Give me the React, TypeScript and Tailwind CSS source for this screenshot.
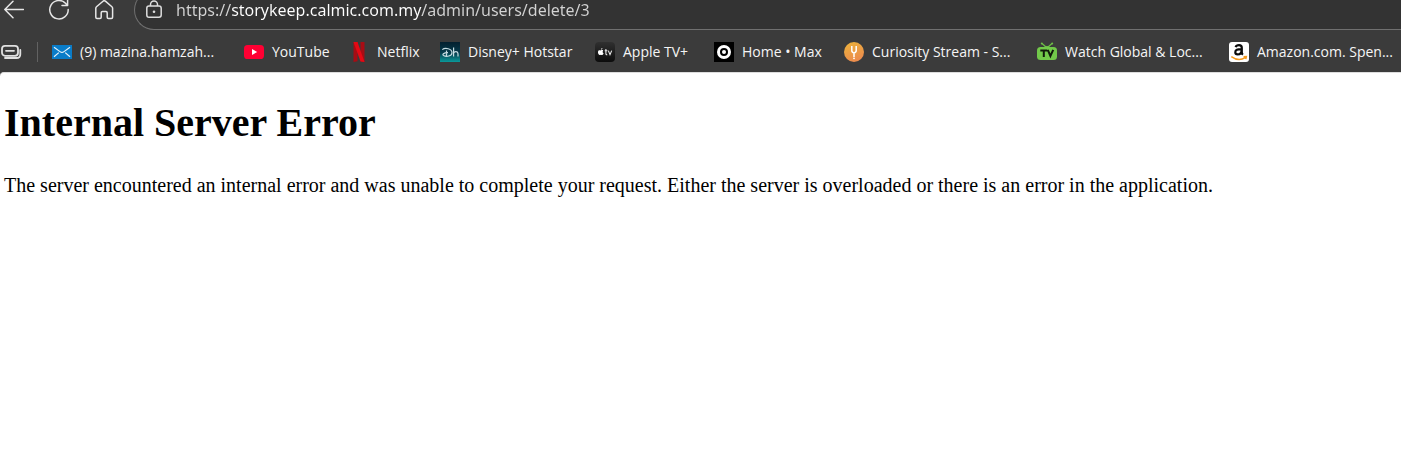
import type { ReactNode } from "react";

function MailIcon() {
  return (
    <svg viewBox="0 0 20 20" className="size-5 shrink-0" aria-hidden="true">
      <rect y="3" width="20" height="14" fill="#0a7cc8" />
      <path d="M2 5.2 8 9.6q2 1.7 4 0l6-4.4M2 14.8l4.8-4.2M18 14.8l-4.8-4.2" fill="none" stroke="#e4f1fa" strokeWidth="1.2" />
    </svg>
  );
}

function YouTubeIcon() {
  return (
    <svg viewBox="0 0 20 20" className="size-5 shrink-0" aria-hidden="true">
      <rect y="3" width="20" height="14" rx="3.6" fill="#ff0033" />
      <path d="M8 7v6l5.2-3z" fill="#fff" />
    </svg>
  );
}

function NetflixIcon() {
  return (
    <svg viewBox="0 0 20 20" className="size-5 shrink-0" aria-hidden="true">
      <path d="M4.500 0h4v19.300l-4 .7zM11.500 0h4v20l-4-.7z" fill="#a80c14" />
      <path d="M4.500 0h4l7 20-4-.6z" fill="#e50914" />
    </svg>
  );
}

function HotstarIcon() {
  return (
    <svg viewBox="0 0 20 20" className="size-5 shrink-0" aria-hidden="true">
      <defs>
        <linearGradient id="hotstar" x1="0" y1="0" x2="0" y2="1">
          <stop offset="0" stopColor="#04202f" />
          <stop offset=".55" stopColor="#063c4c" />
          <stop offset="1" stopColor="#0a9a9b" />
        </linearGradient>
      </defs>
      <rect width="20" height="20" fill="url(#hotstar)" />
      <path d="M2.300 7.600C5 5.300 12 6.600 12 10.700c0 3.600-5.700 4.400-8.500 2.700-1.500-1-.2-2.600 4.500-2.700M6.500 8.600v5.400M13.600 5.600v9M13.600 11.200c.8-2 4.400-2.200 4.400.5v2.900" fill="none" stroke="#c6dde3" strokeWidth="1.200" />
    </svg>
  );
}

function AppleTvIcon() {
  return (
    <svg viewBox="0 0 20 20" className="size-5 shrink-0" aria-hidden="true">
      <defs>
        <linearGradient id="appletv" x1="0" y1="0" x2="0" y2="1">
          <stop offset="0" stopColor="#303030" />
          <stop offset="1" stopColor="#0c0c0c" />
        </linearGradient>
      </defs>
      <rect width="20" height="20" rx="4" fill="url(#appletv)" />
      <path d="M5.900 7.600c.1-1 .7-1.600 1.500-1.700.1.900-.6 1.700-1.500 1.700zM8.200 8.500c-.8-.7-1.600-.4-2.300-.1-.7-.3-1.600-.5-2.300.2-1.200 1.300-.5 4.200 1 4.400.5 0 .8-.3 1.300-.3s.8.300 1.300.3c.7-.1 1.200-1 1.400-1.700-1.200-.6-1.200-2.100-.4-2.800z" fill="#fff" />
      <path d="M10.900 7v4.800q0 1 1.400.9M9.700 8.700h2.700M13.300 8.600l1.700 4 1.700-4" fill="none" stroke="#e8e8e8" strokeWidth="1.100" />
    </svg>
  );
}

function MaxIcon() {
  return (
    <svg viewBox="0 0 20 20" className="size-5 shrink-0" aria-hidden="true">
      <rect width="20" height="20" fill="#000" />
      <circle cx="10" cy="10" r="5.500" fill="none" stroke="#fff" strokeWidth="3" />
      <circle cx="10" cy="10" r="2" fill="#fff" />
    </svg>
  );
}

function CuriosityIcon() {
  return (
    <svg viewBox="0 0 20 20" className="size-5 shrink-0" aria-hidden="true">
      <defs>
        <linearGradient id="curiosity" x1="0" y1="0" x2=".4" y2="1">
          <stop offset="0" stopColor="#ecb43a" />
          <stop offset="1" stopColor="#ec8d4d" />
        </linearGradient>
      </defs>
      <circle cx="10" cy="10" r="10" fill="url(#curiosity)" />
      <path d="M7.800 4v4.600q0 2 2.200 2.300 2.200-.3 2.200-2.300V4M10 10.500V15" fill="none" stroke="#fff" strokeWidth="1.500" />
      <circle cx="10" cy="16.300" r=".9" fill="#fff" />
    </svg>
  );
}

function WatchTvIcon() {
  return (
    <svg viewBox="0 0 20 20" className="size-5 shrink-0" aria-hidden="true">
      <path d="M9.500 5.500 5 1.500M10.500 5.500l4.500-4" stroke="#6cbf45" strokeWidth="1.200" />
      <circle cx="4.800" cy="1.600" r="1" fill="#6cbf45" />
      <circle cx="15.200" cy="1.600" r="1" fill="#6cbf45" />
      <path d="M6.500 5.500q3.500-3 7 0z" fill="#72c94a" />
      <rect y="5" width="20" height="13" rx="3.500" fill="#72c94a" />
      <path d="M3.300 8.600h7M6.800 8.600V15M10.800 7.800l2.600 6.200 2.800-6.200" fill="none" stroke="#101a0b" strokeWidth="2" />
    </svg>
  );
}

function AmazonIcon() {
  return (
    <svg viewBox="0 0 20 20" className="size-5 shrink-0" aria-hidden="true">
      <rect width="20" height="20" rx="3" fill="#fff" />
      <path d="M6.600 5.200Q7.300 3.200 10 3.200q2.800 0 2.800 2.600v4.400q0 1.600 1.200 2.400M12.600 7.200q-6.300-.2-6.300 3 0 2.200 2.300 2.200 4 0 4-4.200" fill="none" stroke="#0b0b0b" strokeWidth="2.200" />
      <path d="M2.300 14.600q7.200 5.200 14 1M14.600 14.700l2.800-.2-.6 2.600" fill="none" stroke="#f79a1c" strokeWidth="1.400" />
    </svg>
  );
}

const bookmarks: { label: string; icon: ReactNode; width: string }[] = [
  { label: "(9) mazina.hamzah...", icon: <MailIcon />, width: "w-48" },
  { label: "YouTube", icon: <YouTubeIcon />, width: "w-[105px]" },
  { label: "Netflix", icon: <NetflixIcon />, width: "w-[91px]" },
  { label: "Disney+ Hotstar", icon: <HotstarIcon />, width: "w-[155px]" },
  { label: "Apple TV+", icon: <AppleTvIcon />, width: "w-[119px]" },
  { label: "Home • Max", icon: <MaxIcon />, width: "w-[130px]" },
  { label: "Curiosity Stream - S...", icon: <CuriosityIcon />, width: "w-[193px]" },
  { label: "Watch Global & Loc...", icon: <WatchTvIcon />, width: "w-48" },
  { label: "Amazon.com. Spen...", icon: <AmazonIcon />, width: "w-48" },
];

function Toolbar() {
  return (
    <div className="flex h-[30px] items-end overflow-hidden">
      <div className="flex h-10 shrink-0 items-center gap-[25px] pl-1 text-[#e6e6e6]">
        <button type="button" aria-label="Back">
          <svg viewBox="0 0 20 20" className="size-5" fill="none" stroke="currentColor" strokeWidth="1.500" strokeLinecap="round" strokeLinejoin="round">
            <path d="M19.500 9.500H.8M9 1.300.8 9.500 9 17.700" />
          </svg>
        </button>
        <button type="button" aria-label="Refresh">
          <svg viewBox="0 0 20 20" className="size-5" fill="none" stroke="currentColor" strokeWidth="1.500" strokeLinecap="round" strokeLinejoin="round">
            <path d="M19.200 9.500A9.200 9.200 0 1 1 16.500 3.200L18.600 5.500M18.600-.5V5.500H13" />
          </svg>
        </button>
        <button type="button" aria-label="Home">
          <svg viewBox="0 0 20 20" className="size-5" fill="none" stroke="currentColor" strokeWidth="1.500" strokeLinejoin="round">
            <path d="M1.800 8.300q0-.9.700-1.500L9 1.200q1.200-1 2.400 0l6.500 5.600q.7.600.7 1.500v8.900q0 1.200-1.200 1.200h-3q-1.200 0-1.200-1.200v-4.500q0-1.200-1.200-1.200H8.400q-1.200 0-1.200 1.200v4.500q0 1.200-1.200 1.200H3q-1.200 0-1.200-1.200z" />
          </svg>
        </button>
      </div>
      <div className="ml-5 flex h-10 min-w-0 flex-1 items-center gap-3 rounded-l-full border border-r-0 border-[#707070] bg-[#333333] pl-[9px]">
        <button type="button" aria-label="View site information" className="shrink-0 text-[#dedede]">
          <svg viewBox="0 0 20 20" className="size-5" fill="none" stroke="currentColor" strokeWidth="1.500">
            <rect x="2.800" y="6" width="14.400" height="11.300" rx="2.200" />
            <path d="M6.500 6V4.500a3.500 3.500 0 0 1 7 0V6" />
            <circle cx="10" cy="11.700" r="1.300" fill="currentColor" stroke="none" />
          </svg>
        </button>
        <input
          type="text"
          aria-label="Address"
          spellCheck={false}
          defaultValue="https://storykeep.calmic.com.my/admin/users/delete/3"
          className="min-w-0 flex-1 bg-[linear-gradient(90deg,#d4d4d4_56px,#ffffff_56px,#ffffff_246px,#d4d4d4_246px)] bg-clip-text font-['Noto_Sans',sans-serif] text-[16px] leading-6 text-transparent caret-white outline-none"
        />
      </div>
    </div>
  );
}

function BookmarksBar() {
  return (
    <nav aria-label="Favorites" className="flex h-[42px] items-center overflow-hidden pt-[2px]">
      <button type="button" aria-label="Workspaces" className="shrink-0 text-[#e0e0e0]">
        <svg viewBox="0 0 22 20" className="h-5 w-[22px]" fill="none" stroke="currentColor" strokeWidth="1.800">
          <rect x="2" y="3.800" width="16" height="10" rx="3" />
          <path d="M6 8.800h8M5 16h11.500q3.800 0 3.800-3.800V8" strokeLinecap="round" />
        </svg>
      </button>
      <span className="mr-[14px] ml-[15px] h-5 w-px shrink-0 bg-[#626262]" />
      <ul className="flex shrink-0">
        {bookmarks.map((item) => (
          <li key={item.label} className={item.width}>
            <a href="#" className="flex items-center gap-2 text-sm whitespace-nowrap text-[#f5f5f5]">
              {item.icon}
              {item.label}
            </a>
          </li>
        ))}
      </ul>
    </nav>
  );
}

export default function App() {
  return (
    <div className="min-h-screen bg-[#3b3b3b] font-['Open_Sans','Noto_Sans',sans-serif]">
      <header>
        <Toolbar />
        <BookmarksBar />
      </header>
      <main className="min-h-[calc(100vh-72px)] rounded-tl border-t border-[#dddddd] bg-white px-1 pt-[27px] font-['Liberation_Serif',serif] text-black">
        <h1 className="text-[40px] leading-[46px] font-bold">Internal Server Error</h1>
        <p className="mt-7 text-[20px] leading-[23px]">
          The server encountered an internal error and was unable to complete your request. Either the server is overloaded or there is an error in the application.
        </p>
      </main>
    </div>
  );
}
